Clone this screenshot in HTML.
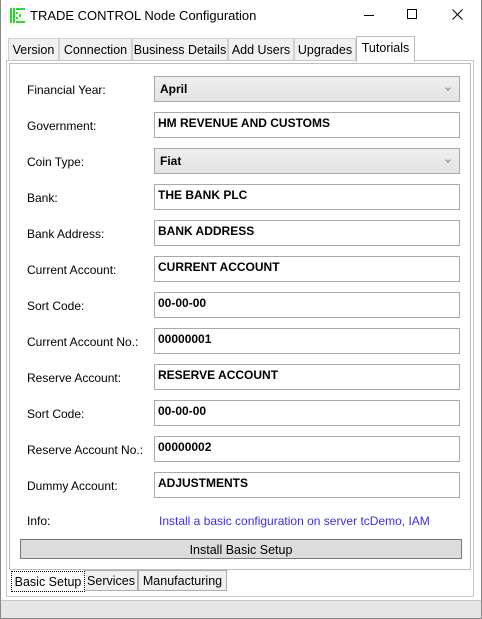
<!DOCTYPE html>
<html><head><style>
*{margin:0;padding:0;box-sizing:border-box}
body{width:482px;height:619px;background:#fff;font-family:"Liberation Sans",sans-serif;font-size:12px;color:#000;position:relative;overflow:hidden}
.a{position:absolute}
.win{left:0;top:0;width:482px;height:619px;border:1px solid #888;border-top:none}
.tab{position:absolute;top:38px;height:23px;background:#f0f0f0;border:1px solid #d0d0d0;border-bottom:none;padding:4px 0 0 0;text-align:center;font-size:12.5px}
.lbl{position:absolute;left:27px;font-size:12px}
.in{position:absolute;left:154px;width:306px;height:26px;border:1px solid #a9a9a9;background:#fff;font-weight:bold;font-size:12px;padding:3px 0 0 3px}
.cb{background:linear-gradient(#efefef,#e3e3e3);border-color:#aaa;padding:5px 0 0 5px}
.cb:after{content:"";position:absolute;right:9px;top:9px;width:3px;height:3px;border-right:1px solid #888;border-bottom:1px solid #888;transform:rotate(45deg)}
.bt{position:absolute;top:570px;height:21px;background:#f0f0f0;border:1px solid #adadad;font-size:12.5px;padding:3px 0 0 0;text-align:center}
</style></head><body>
<div class="a win"></div>
<svg class="a" style="left:10px;top:8px" width="16" height="15" viewBox="0 0 16 15">
<g fill="#22e022"><rect x="0" y="0" width="2" height="15"/><rect x="3" y="0" width="2" height="15"/><rect x="6" y="0" width="9" height="2"/><rect x="6" y="4" width="2" height="2"/><rect x="6" y="9" width="2" height="2"/><rect x="6" y="13" width="9" height="2"/><rect x="9" y="6" width="2" height="3"/></g></svg>
<div class="a" style="left:30px;top:8px;font-size:13px">TRADE CONTROL Node Configuration</div>
<div class="a" style="left:364px;top:15px;width:10px;height:1px;background:#000"></div>
<div class="a" style="left:407px;top:9px;width:10px;height:10px;border:1px solid #000"></div>
<svg class="a" style="left:452px;top:9px" width="11" height="11"><path d="M0.5 0.5L10.5 10.5M10.5 0.5L0.5 10.5" stroke="#000" stroke-width="1"/></svg>

<div class="tab" style="left:8px;width:51px">Version</div>
<div class="tab" style="left:59px;width:73px">Connection</div>
<div class="tab" style="left:132px;width:96px">Business Details</div>
<div class="tab" style="left:228px;width:66px">Add Users</div>
<div class="tab" style="left:294px;width:62px">Upgrades</div>
<div class="tab" style="left:356px;width:59px;top:36px;height:26px;background:#fff;border-color:#bbb;z-index:2">Tutorials</div>
<div class="a" style="left:6px;top:60px;width:468px;height:537px;border:1px solid #c8c8c8"></div>
<div class="a" style="left:9px;top:63px;width:462px;height:507px;border:1px solid #bdbdbd"></div>

<div class="lbl" style="top:83px">Financial Year:</div><div class="in cb" style="top:76px">April</div>
<div class="lbl" style="top:119px">Government:</div><div class="in" style="top:112px">HM REVENUE AND CUSTOMS</div>
<div class="lbl" style="top:155px">Coin Type:</div><div class="in cb" style="top:148px">Fiat</div>
<div class="lbl" style="top:191px">Bank:</div><div class="in" style="top:184px">THE BANK PLC</div>
<div class="lbl" style="top:227px">Bank Address:</div><div class="in" style="top:220px">BANK ADDRESS</div>
<div class="lbl" style="top:263px">Current Account:</div><div class="in" style="top:256px">CURRENT ACCOUNT</div>
<div class="lbl" style="top:299px">Sort Code:</div><div class="in" style="top:292px">00-00-00</div>
<div class="lbl" style="top:335px">Current Account No.:</div><div class="in" style="top:328px">00000001</div>
<div class="lbl" style="top:371px">Reserve Account:</div><div class="in" style="top:364px">RESERVE ACCOUNT</div>
<div class="lbl" style="top:407px">Sort Code:</div><div class="in" style="top:400px">00-00-00</div>
<div class="lbl" style="top:443px">Reserve Account No.:</div><div class="in" style="top:436px">00000002</div>
<div class="lbl" style="top:479px">Dummy Account:</div><div class="in" style="top:472px">ADJUSTMENTS</div>
<div class="lbl" style="top:514px">Info:</div>
<div class="a" style="left:159px;top:514px;color:#3a2cf0">Install a basic configuration on server tcDemo, IAM</div>
<div class="a" style="left:20px;top:539px;width:442px;height:20px;background:#dcdcdc;border:1px solid #777;text-align:center;padding-top:3px;font-size:12.5px">Install Basic Setup</div>

<div class="bt" style="left:11px;width:74px;top:571px;height:21px;background:#fff;border:1px dotted #000;z-index:2">Basic Setup</div>
<div class="bt" style="left:84px;width:54px">Services</div>
<div class="bt" style="left:138px;width:89px">Manufacturing</div>

<div class="a" style="left:1px;top:600px;width:480px;height:18px;background:#e6e6e6;border-top:1px solid #c8c8c8"></div>
</body></html>
